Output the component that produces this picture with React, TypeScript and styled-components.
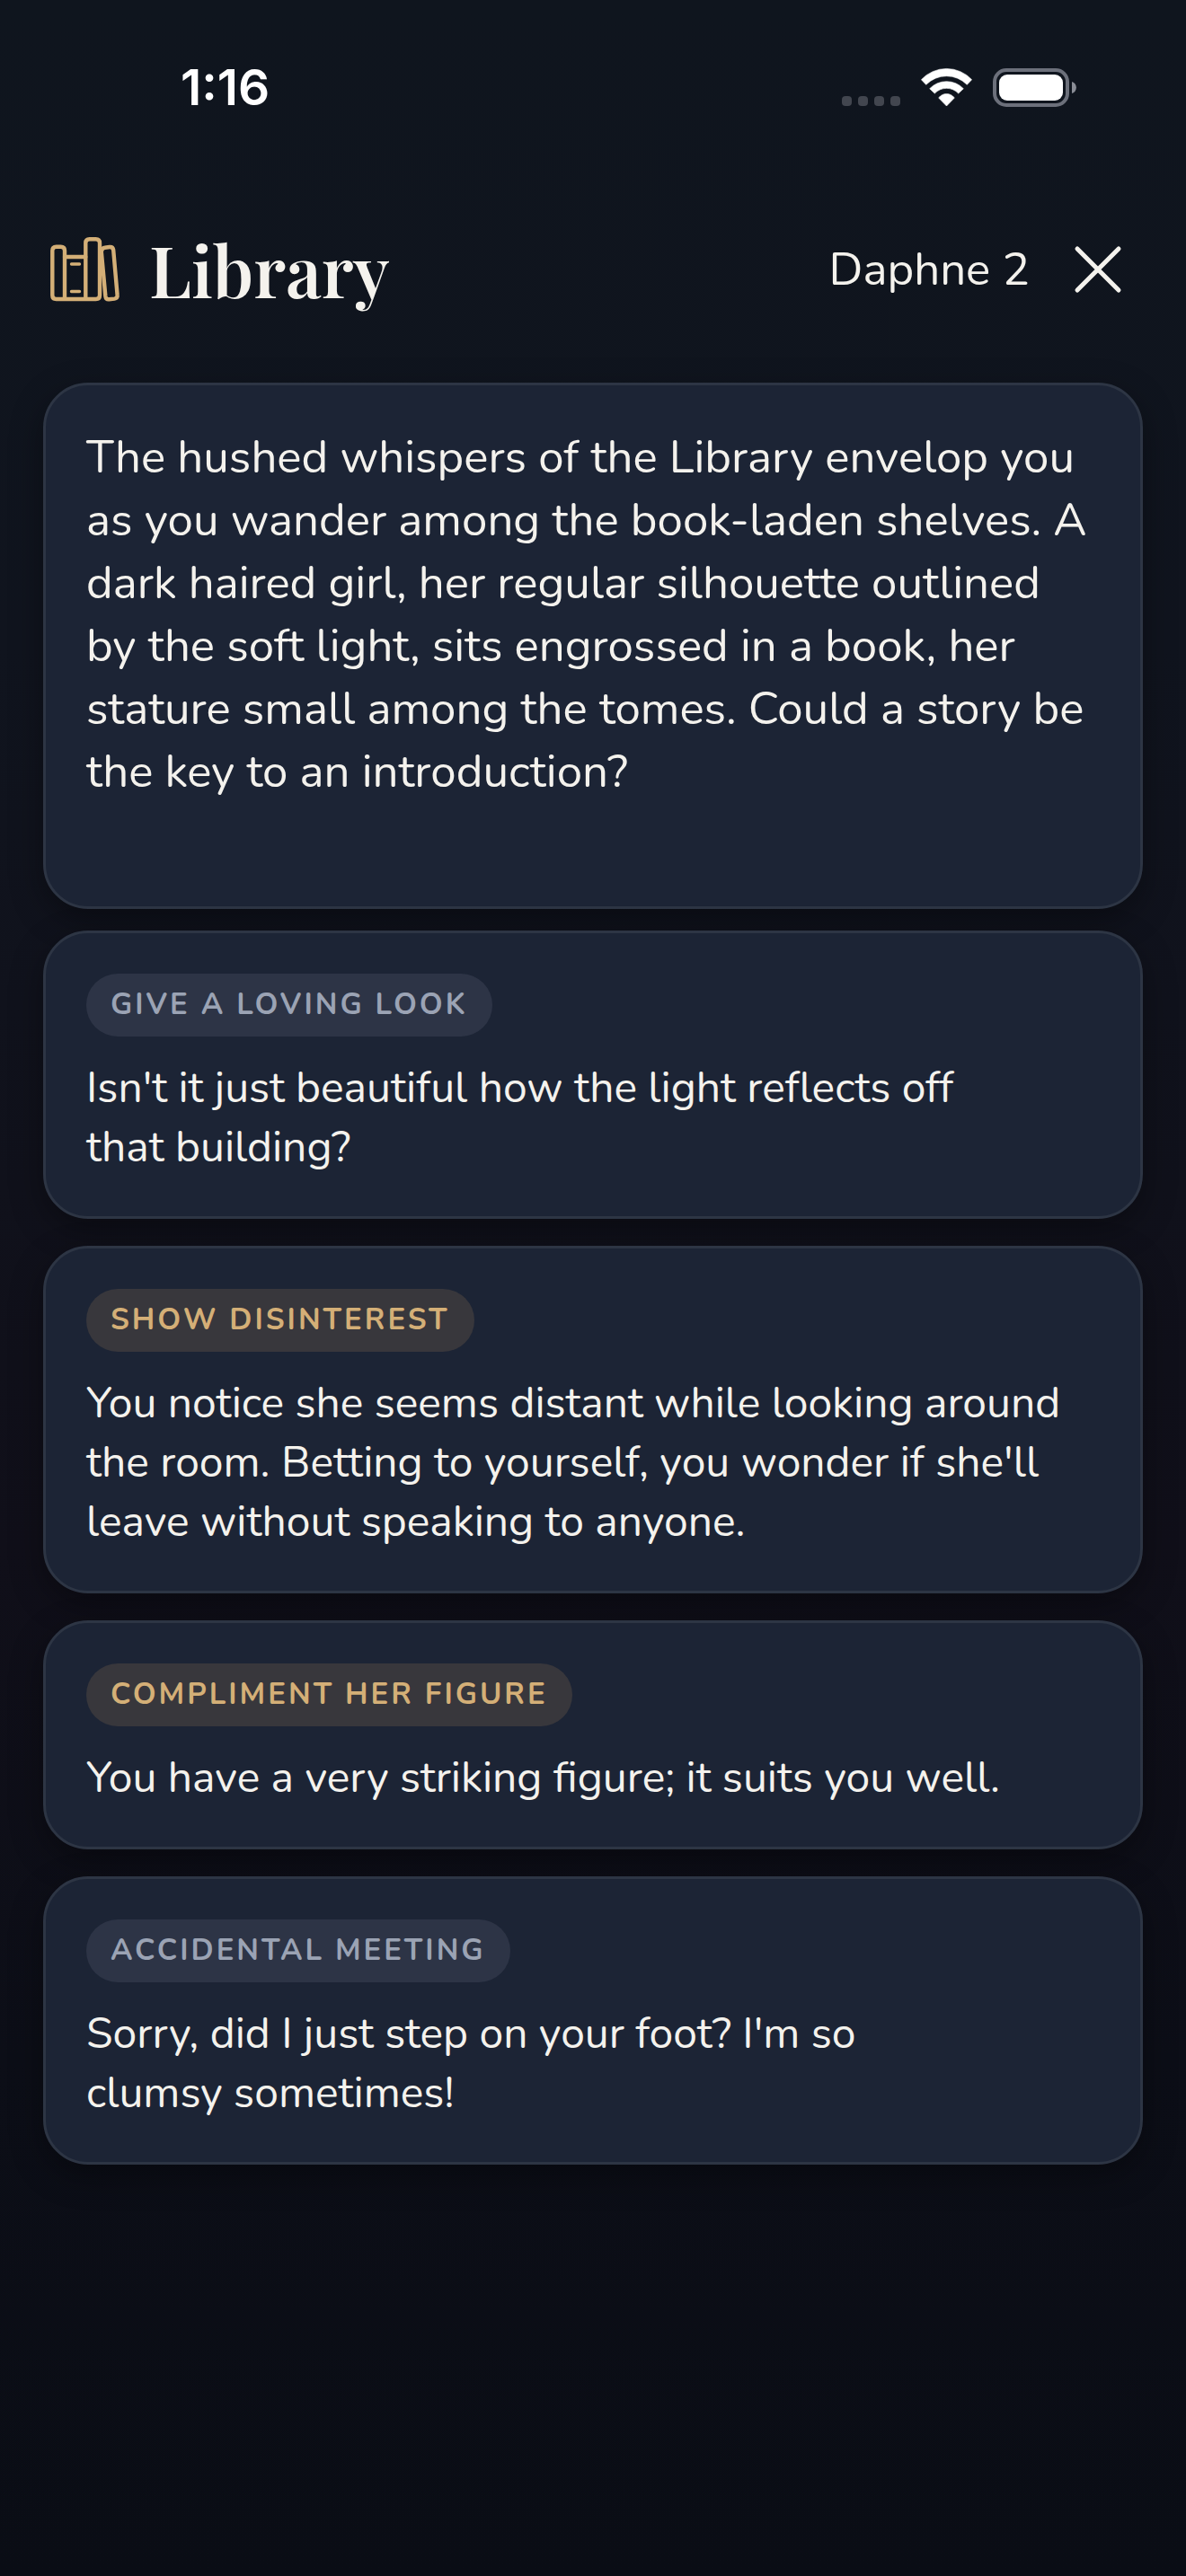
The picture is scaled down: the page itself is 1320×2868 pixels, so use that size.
import React from "react";
import styled, { createGlobalStyle } from "styled-components";

const color = {
  ink: "#f4f2ed",
  gold: "#d4af77",
  muted: "#9ba3b4",
  card: "#1c2435",
  border: "#2d3544",
};

const bodyFont = `Nunito, "Nunito Sans", Lato, "Open Sans", sans-serif`;
const titleFont = `"Playfair Display", "Liberation Serif", serif`;
const statusFont = `Inter, "Liberation Sans", sans-serif`;

const GlobalStyle = createGlobalStyle`
  *, *::before, *::after { box-sizing: border-box; }
  html { background: #0a0d15; }
  body { margin: 0; }
`;

const Screen = styled.div`
  min-height: 100vh;
  background: linear-gradient(180deg, #0f151e 0%, #10141e 25%, #100f19 60%, #0c0e17 80%, #0a0d15 100%);
  color: ${color.ink};
  font-family: ${bodyFont};
`;

const StatusBar = styled.div`
  height: 192px;
  padding: 2px 122px 0 201px;
  display: flex;
  align-items: center;
  justify-content: space-between;
  color: #fff;
`;

const Clock = styled.time`
  font: 600 55px/66px ${statusFont};
`;

const StatusIcons = styled.div`
  display: flex;
  align-items: center;
  gap: 23px;

  svg { display: block; }
`;

const Header = styled.header`
  height: 216px;
  padding: 0 68px 0 56px;
  display: flex;
  align-items: center;
  justify-content: space-between;
`;

const Place = styled.div`
  display: flex;
  align-items: center;
  gap: 33px;
`;

const Title = styled.h1`
  margin: 0;
  font: 600 78px/104px ${titleFont};
`;

const Companion = styled.div`
  display: flex;
  align-items: center;
  gap: 46px;
  font-size: 51px;
  line-height: 70px;
`;

const CloseButton = styled.button`
  width: 60px;
  height: 60px;
  padding: 0;
  border: 0;
  background: none;
  color: inherit;
  display: grid;
  place-items: center;
  cursor: pointer;
`;

const Content = styled.main`
  padding: 18px 48px 48px;
  display: flex;
  flex-direction: column;
  gap: 24px;
`;

const cardSurface = `
  padding: 45px 45px 44px;
  border: 3px solid ${color.border};
  border-radius: 50px;
  background: ${color.card};
  box-shadow: 0 12px 36px rgba(0, 0, 0, 0.35);
`;

const Story = styled.p`
  ${cardSurface}
  margin: 0;
  min-height: 586px;
  font-size: 51px;
  line-height: 70px;
  white-space: pre-line;
`;

const Options = styled.div`
  display: flex;
  flex-direction: column;
  gap: 30px;
`;

const OptionCard = styled.button`
  ${cardSurface}
  display: flex;
  flex-direction: column;
  align-items: flex-start;
  gap: 24px;
  color: inherit;
  font-family: inherit;
  text-align: left;
  cursor: pointer;
`;

const Tag = styled.span<{ $tone: Tone }>`
  padding: 12px 27px;
  border-radius: 35px;
  background: ${(p) => (p.$tone === "gold" ? "#38373c" : "#2d3446")};
  color: ${(p) => (p.$tone === "gold" ? color.gold : color.muted)};
  font-size: 33px;
  font-weight: 700;
  line-height: 46px;
  letter-spacing: 3px;
  text-transform: uppercase;
`;

const Line = styled.span`
  font-size: 48px;
  line-height: 66px;
  white-space: pre-line;
`;

type Tone = "gold" | "muted";

const story = `The hushed whispers of the Library envelop you
as you wander among the book-laden shelves. A
dark haired girl, her regular silhouette outlined
by the soft light, sits engrossed in a book, her
stature small among the tomes. Could a story be
the key to an introduction?`;

const options: { tag: string; tone: Tone; text: string }[] = [
  {
    tag: "Give a loving look",
    tone: "muted",
    text: "Isn't it just beautiful how the light reflects off\nthat building?",
  },
  {
    tag: "Show disinterest",
    tone: "gold",
    text: "You notice she seems distant while looking around\nthe room. Betting to yourself, you wonder if she'll\nleave without speaking to anyone.",
  },
  {
    tag: "Compliment her figure",
    tone: "gold",
    text: "You have a very striking figure; it suits you well.",
  },
  {
    tag: "Accidental meeting",
    tone: "muted",
    text: "Sorry, did I just step on your foot? I'm so\nclumsy sometimes!",
  },
];

const SignalDots = () => (
  <svg width="65" height="44" viewBox="0 0 65 44" fill="#42464f" aria-hidden="true">
    {[0, 18, 36, 54].map((x) => (
      <rect key={x} x={x} y="32" width="11" height="11" rx="4" />
    ))}
  </svg>
);

const Wifi = () => (
  <svg width="57" height="44" viewBox="0 0 57 44" fill="#fff" stroke="#fff" strokeWidth="0.6" strokeLinejoin="round" aria-hidden="true">
    <path d="M0.4 13.7A38.3 38.3 0 0 1 56.6 13.7L51.3 19.3A31.9 31.9 0 0 0 5.7 19.3Z" />
    <path d="M9.7 23.7A26 26 0 0 1 47.3 23.7L41.7 29A18.2 18.2 0 0 0 15.3 29Z" />
    <path d="M19.7 34A10.8 10.8 0 0 1 37.3 34L28.5 43Z" />
  </svg>
);

const Battery = () => (
  <svg width="93" height="44" viewBox="0 0 93 44" aria-hidden="true">
    <rect x="2" y="3" width="81" height="39" rx="13" fill="none" stroke="#6c707b" strokeWidth="4" />
    <rect x="7" y="8" width="71" height="29" rx="9" fill="#fff" />
    <path d="M88 16C94.5 17.5 94.5 27.5 88 29Z" fill="#8a8d96" />
  </svg>
);

const Books = () => (
  <svg width="77" height="72" viewBox="0 0 77 72" fill="none" stroke={color.gold} strokeWidth="4.4" strokeLinecap="round" strokeLinejoin="round" aria-hidden="true">
    <path d="M16 69V15Q16 10.7 11.7 10.7H6.6Q2.3 10.7 2.3 15V64.7Q2.3 69 6.6 69H50.7Q55 69 55 64.7V6.5Q55 2.2 50.7 2.2H43.6Q39.3 2.2 39.3 6.5V69" />
    <path d="M16 22H39.3" />
    <path d="M23.5 30H32.5M23.5 60.5H32.5" strokeWidth="3.4" />
    <path d="M56.8 16L61.4 66Q61.9 69.6 65.4 69.3L71.4 68.6Q75 68 74.6 64.5L70.2 14.4Q69.7 10.7 66 11L60.5 11.7Q57.6 12 56.8 16" />
  </svg>
);

const Cross = () => (
  <svg width="54" height="54" viewBox="0 0 54 54" fill="none" stroke="currentColor" strokeWidth="5" strokeLinecap="round" aria-hidden="true">
    <path d="M4 4L50 50M50 4L4 50" />
  </svg>
);

export default function App() {
  return (
    <>
      <GlobalStyle />
      <Screen>
        <StatusBar>
          <Clock>1:16</Clock>
          <StatusIcons>
            <SignalDots />
            <Wifi />
            <Battery />
          </StatusIcons>
        </StatusBar>
        <Header>
          <Place>
            <Books />
            <Title>Library</Title>
          </Place>
          <Companion>
            <span>Daphne 2</span>
            <CloseButton type="button" aria-label="Close">
              <Cross />
            </CloseButton>
          </Companion>
        </Header>
        <Content>
          <Story>{story}</Story>
          <Options>
            {options.map((o) => (
              <OptionCard key={o.tag} type="button">
                <Tag $tone={o.tone}>{o.tag}</Tag>
                <Line>{o.text}</Line>
              </OptionCard>
            ))}
          </Options>
        </Content>
      </Screen>
    </>
  );
}
